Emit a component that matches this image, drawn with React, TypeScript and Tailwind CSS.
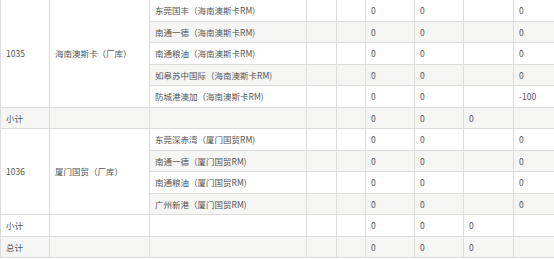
const font = { fontFamily: '"Noto Sans CJK SC", "Noto Sans", sans-serif' };

type Row = {
  code?: { text: string; span: number };
  name?: { text: string; span: number };
  label?: string;
  first?: string;
  line: string;
  a: string;
  b: string;
  c: string;
  d: string;
};

const rows: Row[] = [
  { code: { text: '1035', span: 5 }, name: { text: '海南澳斯卡（厂库）', span: 5 }, line: '东莞国丰（海南澳斯卡RM)', a: '0', b: '0', c: '', d: '0' },
  { line: '南通一德（海南澳斯卡RM)', a: '0', b: '0', c: '', d: '0' },
  { line: '南通粮油（海南澳斯卡RM)', a: '0', b: '0', c: '', d: '0' },
  { line: '如皋苏中国际（海南澳斯卡RM)', a: '0', b: '0', c: '', d: '0' },
  { line: '防城港澳加（海南澳斯卡RM)', a: '0', b: '0', c: '', d: '-100' },
  { first: '小计', line: '', a: '0', b: '0', c: '0', d: '' },
  { code: { text: '1036', span: 4 }, name: { text: '厦门国贸（厂库）', span: 4 }, line: '东莞深赤湾（厦门国贸RM)', a: '0', b: '0', c: '', d: '0' },
  { line: '南通一德（厦门国贸RM)', a: '0', b: '0', c: '', d: '0' },
  { line: '南通粮油（厦门国贸RM)', a: '0', b: '0', c: '', d: '0' },
  { line: '广州新港（厦门国贸RM)', a: '0', b: '0', c: '', d: '0' },
  { first: '小计', line: '', a: '0', b: '0', c: '0', d: '' },
  { first: '总计', line: '', a: '0', b: '0', c: '0', d: '' },
];

const td = 'border border-[#dcdcdc] px-[5px] py-0 align-middle h-[21.5px] whitespace-nowrap overflow-hidden';

export default function App() {
  return (
    <div className="w-[554px] h-[259px] overflow-hidden bg-white">
      <table
        className="table-fixed border-collapse w-[555px] -mt-px text-[8.5px] text-[#555] leading-none"
        style={font}
      >
        <colgroup>
          <col className="w-[49px]" />
          <col className="w-[100px]" />
          <col className="w-[157px]" />
          <col className="w-[30px]" />
          <col className="w-[29px]" />
          <col className="w-[49px]" />
          <col className="w-[49px]" />
          <col className="w-[50px]" />
          <col className="w-[42px]" />
        </colgroup>
        <tbody>
          {rows.map((r, i) => (
            <tr key={i} className="even:bg-[#f5f5f4]">
              {r.code && (
                <td rowSpan={r.code.span} className={`${td} bg-white`}>
                  {r.code.text}
                </td>
              )}
              {r.name && (
                <td rowSpan={r.name.span} className={`${td} bg-white`}>
                  {r.name.text}
                </td>
              )}
              {r.first !== undefined && (
                <>
                  <td className={td}>{r.first}</td>
                  <td className={td}></td>
                </>
              )}
              <td className={td}>{r.line}</td>
              <td className={td}></td>
              <td className={td}></td>
              <td className={td}>{r.a}</td>
              <td className={td}>{r.b}</td>
              <td className={td}>{r.c}</td>
              <td className={td}>{r.d}</td>
            </tr>
          ))}
        </tbody>
      </table>
    </div>
  );
}
